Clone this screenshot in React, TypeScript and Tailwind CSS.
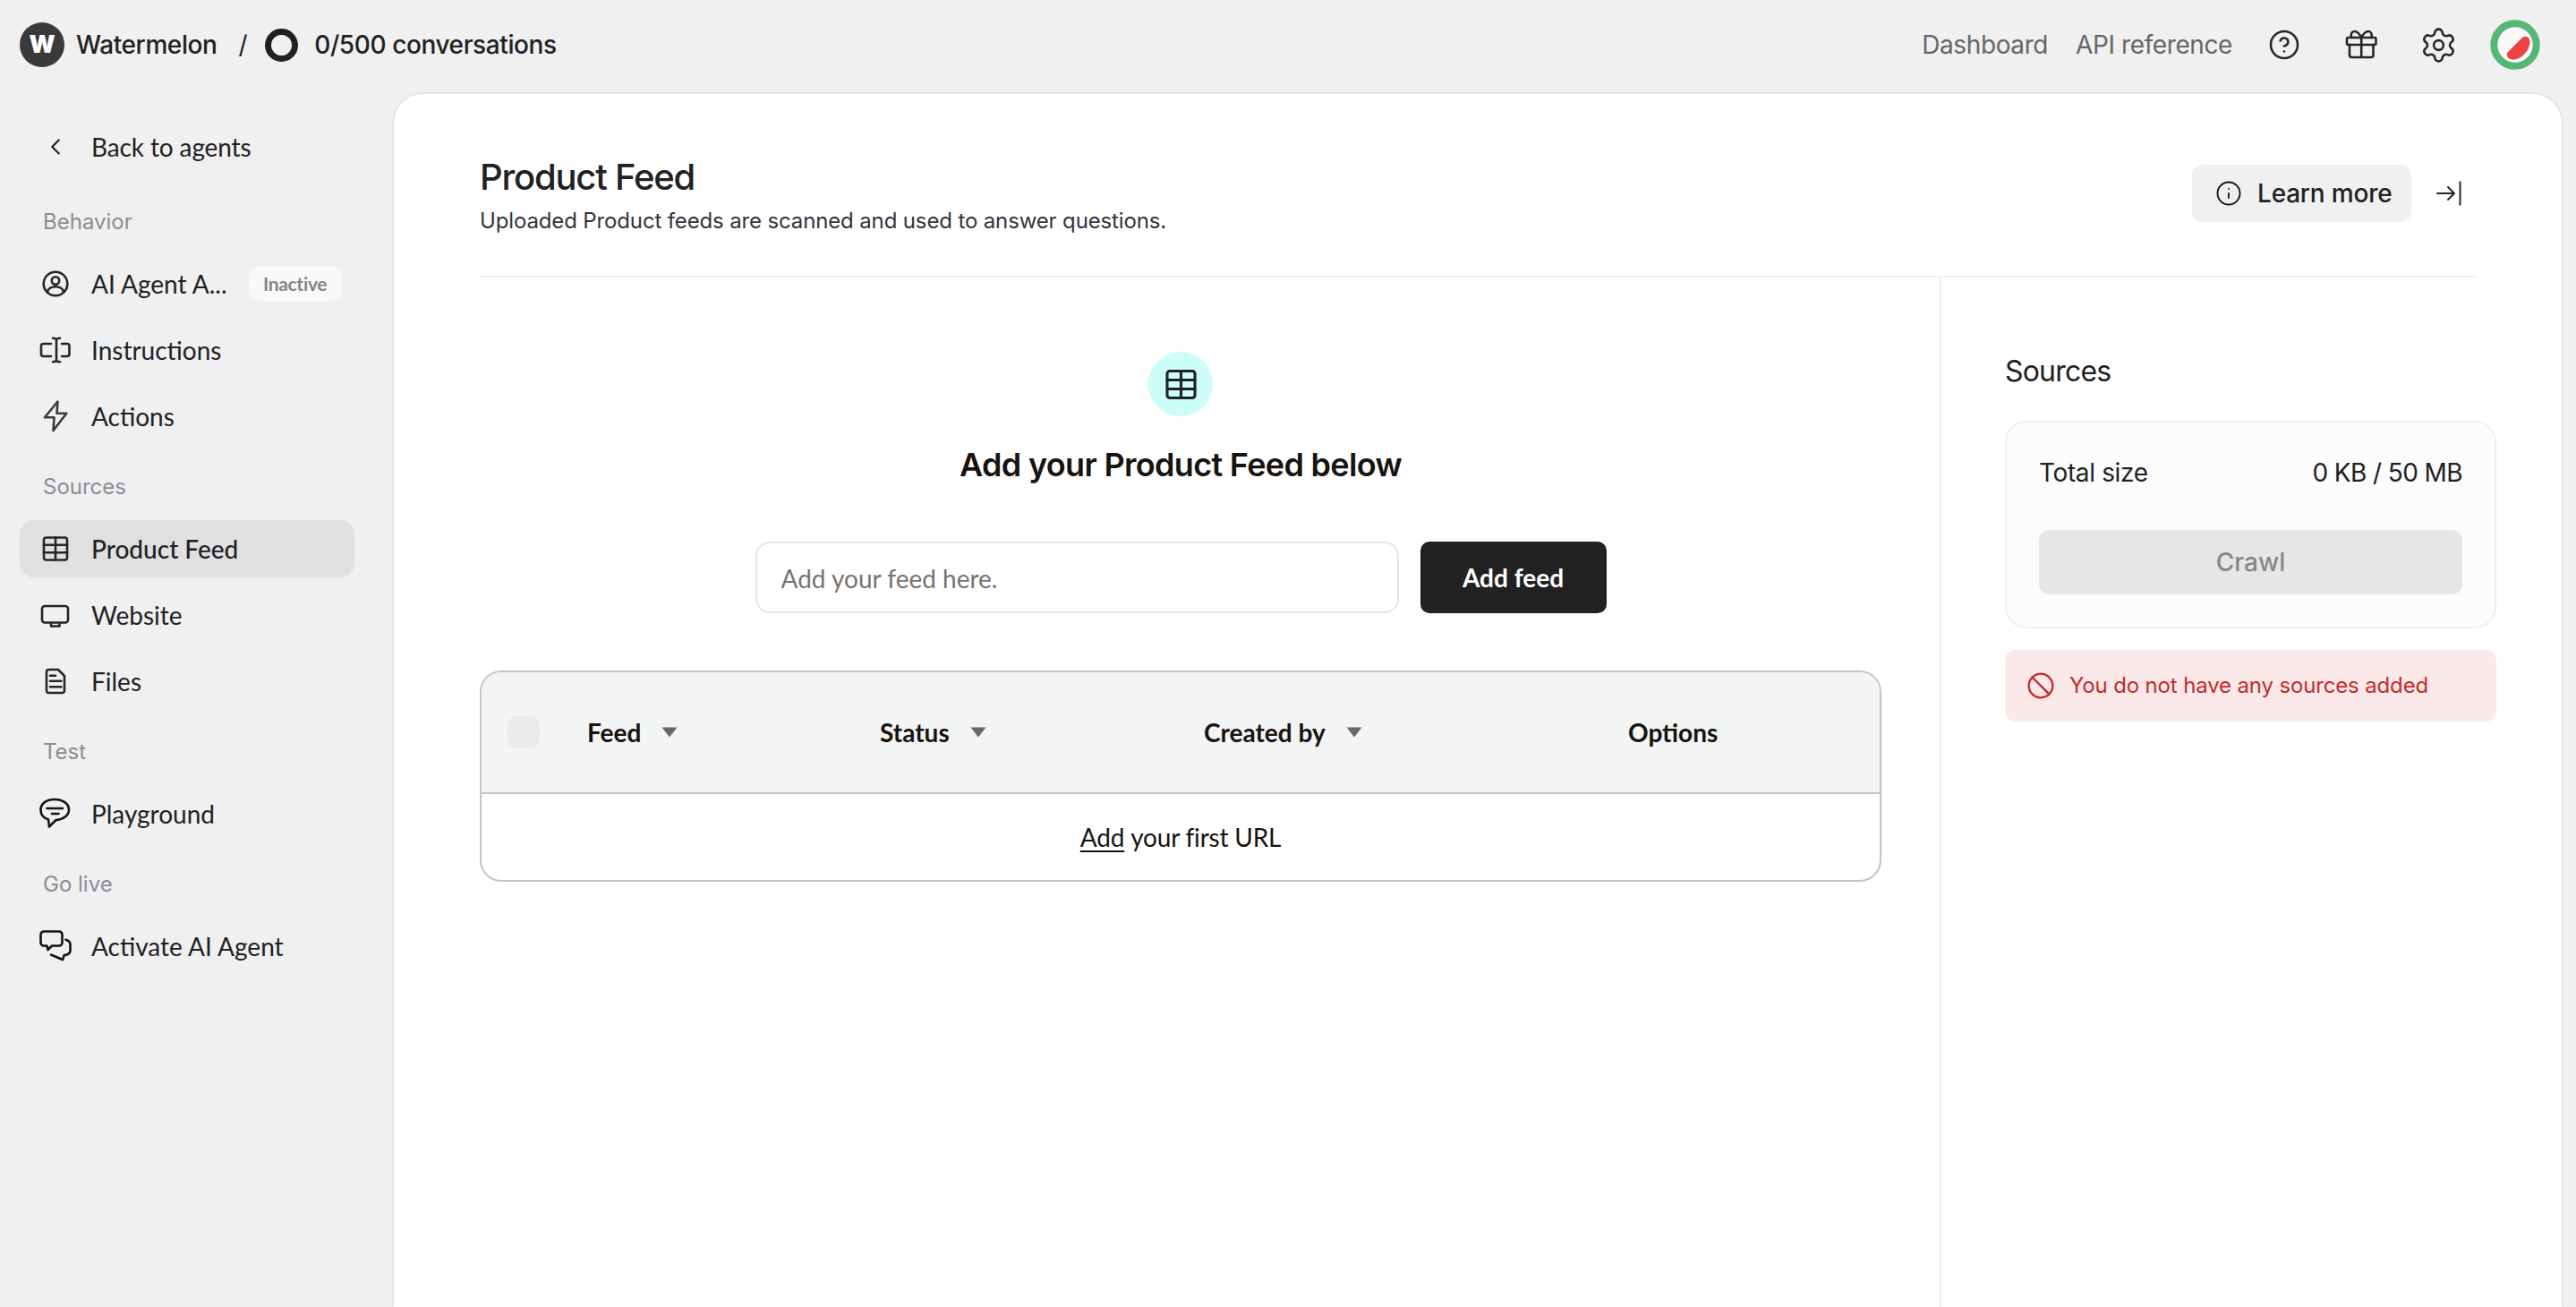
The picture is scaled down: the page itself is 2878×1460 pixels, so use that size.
import React from "react";
import { ChevronLeft, CircleHelp, Settings, Info, Ban } from "lucide-react";

const inter = "font-['Inter',sans-serif]";
const lato = "font-['Lato',sans-serif]";

function Ic({ children, stroke = "#24262b", size = 36 }: { children: React.ReactNode; stroke?: string; size?: number }) {
  return (
    <svg width={size} height={size} viewBox="0 0 36 36" fill="none" stroke={stroke} strokeWidth="2.6" strokeLinecap="round" strokeLinejoin="round" className="shrink-0 overflow-visible">
      {children}
    </svg>
  );
}

const UserIcon = () => (
  <Ic>
    <circle cx="18" cy="18" r="13.3" />
    <circle cx="18" cy="14.5" r="4.2" />
    <path d="M8.7 27.3C10 23 13.5 21.3 18 21.3S26 23 27.3 27.3" />
  </Ic>
);
const InstructionsIcon = () => (
  <Ic>
    <path d="M13 11H4.5A2.5 2.5 0 0 0 2 13.5V22.5A2.5 2.5 0 0 0 4.5 25H13" />
    <path d="M25 11H31A2.5 2.5 0 0 1 33.5 13.5V22.5A2.5 2.5 0 0 1 31 25H25" />
    <path d="M19 7V29M15 4.8C17 4.8 19 5 19 7C19 5 21 4.8 23 4.8M15 31.2C17 31.2 19 31 19 29C19 31 21 31.2 23 31.2" />
  </Ic>
);
const ZapIcon = () => (
  <Ic stroke="#3c3c3e">
    <path d="M20.5 1.5L6 19.3H16.5L15.5 34L30.3 14.7H19.5Z" />
  </Ic>
);
const TableIcon = ({ stroke = "#24262b", size = 36 }: { stroke?: string; size?: number }) => (
  <Ic stroke={stroke} size={size}>
    <rect x="5" y="5.5" width="26" height="25" rx="2.5" />
    <path d="M5 13.8H31M5 22.2H31M18 5.5V30.5" />
  </Ic>
);
const MonitorIcon = () => (
  <Ic>
    <rect x="3" y="8" width="29" height="18.5" rx="3" />
    <path d="M13 27V30.5H22.5V27" />
  </Ic>
);
const FileIcon = () => (
  <Ic>
    <path d="M10.5 5H21L28 12V28.5A2.5 2.5 0 0 1 25.5 31H10.5A2.5 2.5 0 0 1 8 28.5V7.5A2.5 2.5 0 0 1 10.5 5Z" />
    <path d="M12 11.7H18M12 17.7H24.5M12 24.3H24.5" />
  </Ic>
);
const ChatIcon = () => (
  <Ic stroke="#17130f">
    <path d="M17 2C26 2 33 6.5 33 13.5C33 20 26.5 24.5 18.5 25L11 32.5L10 24.3C5 23 1.5 19 1.5 13.5C1.5 6.5 8 2 17 2Z" />
    <path d="M8.5 12H26M14 18H21.5" />
  </Ic>
);
const ChatsIcon = () => (
  <Ic stroke="#17130f">
    <path d="M5 1.5H22A3.5 3.5 0 0 1 25.5 5V14A3.5 3.5 0 0 1 22 17.5H14L9.5 22L8.5 17.5H5A3.5 3.5 0 0 1 1.5 14V5A3.5 3.5 0 0 1 5 1.5Z" />
    <path d="M29.5 10.7C32.5 11.5 34.5 13 34.5 16V23C34.5 26 31 28 27.7 28L26 33L13 27.5" />
  </Ic>
);
const GiftIcon = () => (
  <svg width="36" height="36" viewBox="0 0 36 36" fill="none" stroke="#24262b" strokeWidth="2.6" strokeLinecap="round" strokeLinejoin="round" className="overflow-visible">
    <rect x="2" y="10" width="32.5" height="8" rx="1.5" />
    <path d="M5 18V29.5A2.5 2.5 0 0 0 7.5 32H29A2.5 2.5 0 0 0 31.5 29.5V18M18.2 10V32" />
    <path d="M18.2 10C16 5.5 13.5 3 10.5 3C7.5 3 6 6 7 10M18.2 10C20.5 5.5 23 3 26 3C29 3 30.5 6 29.5 10" />
  </svg>
);
const Avatar = () => (
  <svg width="56" height="56" viewBox="0 0 56 56" fill="none">
    <circle cx="28" cy="28" r="23.7" fill="#f9f7f7" stroke="#56b678" strokeWidth="8" />
    <path d="M20 36L36 20C40 17 45 20 44.5 26C43 37 33 45 25 44.5C20 44 17 40 20 36Z" fill="#ea4444" />
  </svg>
);
const CollapseIcon = () => (
  <svg width="30" height="30" viewBox="0 0 30 30" fill="none" stroke="#24262b" strokeWidth="2" strokeLinecap="round" strokeLinejoin="round">
    <path d="M2 15H21M14 8L21 15L14 22" />
    <path d="M27.5 1.5V28.5" strokeLinecap="butt" />
  </svg>
);
const Caret = () => (
  <svg width="18" height="12" viewBox="0 0 18 12" className="shrink-0">
    <path d="M0.5 0.5H17.5L9 11.5Z" fill="#6b6763" />
  </svg>
);

function Item({ icon, label, active }: { icon: React.ReactNode; label: string; active?: boolean }) {
  return (
    <div className={`h-[64px] w-[374px] ml-[22px] rounded-[16px] flex items-center pl-[22px] gap-[22px] ${active ? "bg-[#e0e0e0]" : ""}`}>
      {icon}
      <span className={`${lato} text-[28px] leading-[40px] text-[#202124] ${active ? "font-medium" : ""}`}>{label}</span>
    </div>
  );
}

function Group({ title, children }: { title: string; children: React.ReactNode }) {
  return (
    <div className="flex flex-col">
      <div className={`${inter} ml-[48px] h-[36px] mb-[19px] text-[24px] leading-[36px] text-[#8a8d96]`}>{title}</div>
      <div className="flex flex-col gap-[10px]">{children}</div>
    </div>
  );
}

function HeadCell({ label }: { label: string }) {
  return (
    <div className="flex items-center gap-[23px]">
      <span className={`${lato} text-[28px] font-bold leading-[40px] text-[#17130f]`}>{label}</span>
      <Caret />
    </div>
  );
}

export default function App() {
  return (
    <div className="h-screen w-full flex flex-col bg-[#f0f0f0] overflow-hidden">
      <header className="h-[105px] shrink-0 pb-[5px] pl-[22px] pr-[40px] flex items-center justify-between">
        <div className={`${inter} flex items-center text-[28px] font-medium text-[#202124] tracking-[-0.4px]`}>
          <div className="w-[50px] h-[50px] rounded-full bg-[#3a3a3a] flex items-center justify-center text-white text-[27px] font-black">W</div>
          <span className="ml-[13px]">Watermelon</span>
          <span className="ml-[24px] font-normal">/</span>
          <div className="ml-[20px] w-[37px] h-[37px] rounded-full border-[7px] border-[#202124]" />
          <span className="ml-[18px]">0/500 conversations</span>
        </div>
        <div className={`${inter} flex items-center text-[28px] text-[#666666] tracking-[-0.4px]`}>
          <span>Dashboard</span>
          <span className="ml-[31px]">API reference</span>
          <div className="ml-[40px] w-[36px] flex justify-center">
            <CircleHelp size={38} strokeWidth={1.7} color="#24262b" />
          </div>
          <div className="ml-[50px]">
            <GiftIcon />
          </div>
          <div className="ml-[44px] w-[48px] flex justify-center">
            <Settings size={43} strokeWidth={1.45} color="#24262b" />
          </div>
          <div className="ml-[34px]">
            <Avatar />
          </div>
        </div>
      </header>

      <div className="flex-1 flex min-h-0">
        <aside className="w-[440px] shrink-0 pt-[27px] flex flex-col">
          <div className="h-[64px] ml-[22px] flex items-center pl-[22px] gap-[22px]">
            <div className="w-[36px] flex justify-center">
              <ChevronLeft size={30} strokeWidth={1.8} color="#24262b" />
            </div>
            <span className={`${lato} text-[28px] leading-[40px] text-[#202124] tracking-[-0.12px]`}>Back to agents</span>
          </div>
          <div className="mt-[34px] flex flex-col gap-[29px]">
            <Group title="Behavior">
              <div className="h-[64px] w-[374px] ml-[22px] flex items-center pl-[22px] gap-[22px]">
                <UserIcon />
                <span className={`${lato} text-[28px] leading-[40px] text-[#202124]`}>AI Agent A...</span>
                <span className={`${lato} ml-[2px] h-[38px] w-[104px] text-center rounded-[12px] bg-[#f9f9f9] text-[21px] leading-[38px] font-bold tracking-[-0.3px] text-[#85868a]`}>Inactive</span>
              </div>
              <Item icon={<InstructionsIcon />} label="Instructions" />
              <Item icon={<ZapIcon />} label="Actions" />
            </Group>
            <Group title="Sources">
              <Item icon={<TableIcon />} label="Product Feed" active />
              <Item icon={<MonitorIcon />} label="Website" />
              <Item icon={<FileIcon />} label="Files" />
            </Group>
            <Group title="Test">
              <Item icon={<ChatIcon />} label="Playground" />
            </Group>
            <Group title="Go live">
              <Item icon={<ChatsIcon />} label="Activate AI Agent" />
            </Group>
          </div>
        </aside>

        <main className="flex-1 mr-[16px] bg-white rounded-t-[32px] shadow-[0_0_3px_rgba(0,0,0,0.18)] flex flex-col min-w-0">
          <div className="mx-[96px] pt-[69px] pb-[44px] border-b-[2px] border-[#f0f0f0] flex justify-between items-start">
            <div>
              <h1 className={`${inter} text-[40px] leading-[48px] font-medium tracking-[-1.2px] text-[#202124]`}>Product Feed</h1>
              <p className={`${inter} mt-[8px] text-[24px] leading-[34px] tracking-[-0.14px] text-[#33343a]`}>Uploaded Product feeds are scanned and used to answer questions.</p>
            </div>
            <div className="mt-[10px] flex items-center">
              <button className={`${inter} h-[64px] w-[245px] rounded-[12px] bg-[#f0f0f0] flex items-center pl-[26px] gap-[17px] text-[28px] font-medium tracking-[-0.2px] text-[#202124]`}>
                <Info size={30} strokeWidth={1.5} color="#17130f" />
                Learn more
              </button>
              <div className="ml-[27px] mr-[15px]">
                <CollapseIcon />
              </div>
            </div>
          </div>

          <div className="flex-1 flex min-h-0">
            <section className="flex-1 pl-[96px] pr-[65px] pt-[83px] flex flex-col items-center min-w-0">
              <div className="w-[72px] h-[72px] rounded-full bg-[#ccfdf8] flex items-center justify-center">
                <TableIcon stroke="#1f2328" size={43} />
              </div>
              <h2 className={`${inter} mt-[32px] text-[36px] leading-[44px] font-semibold tracking-[-0.68px] text-[#17130f]`}>Add your Product Feed below</h2>
              <div className="mt-[64px] flex items-stretch gap-[24px]">
                <input
                  readOnly
                  placeholder="Add your feed here."
                  className={`${lato} w-[719px] h-[80px] rounded-[16px] border-[2px] border-[#e6e6e6] bg-white px-[27px] pt-[2px] text-[28px] placeholder:text-[#77736f] outline-none`}
                />
                <button className={`${lato} w-[208px] h-[80px] rounded-[10px] bg-[#212121] text-white text-[28px] font-bold`}>Add feed</button>
              </div>
              <div className="mt-[64px] w-[1566px] rounded-[24px] border-[2px] border-[#c4c4c4] overflow-hidden">
                <div className="h-[136px] bg-[#f3f5f4] border-b-[2px] border-[#c4c4c4] grid grid-cols-[118px_327px_362px_474px_1fr] items-center">
                  <div className="pl-[29px]">
                    <div className="w-[36px] h-[36px] rounded-[10px] bg-[#e9eaec]" />
                  </div>
                  <HeadCell label="Feed" />
                  <HeadCell label="Status" />
                  <HeadCell label="Created by" />
                  <span className={`${lato} text-[28px] font-bold leading-[40px] text-[#17130f]`}>Options</span>
                </div>
                <div className={`${lato} h-[96px] flex items-center justify-center text-[28px] tracking-[-0.2px] text-[#17130f]`}>
                  <span className="underline underline-offset-[4px]">Add</span>
                  <span className="ml-[7px]">your first URL</span>
                </div>
              </div>
            </section>

            <section className="w-[695px] shrink-0 border-l-[2px] border-[#f0f0f0] pl-[71px] pt-[85px]">
              <h3 className={`${inter} text-[32px] leading-[40px] tracking-[-0.8px] text-[#202124]`}>Sources</h3>
              <div className="mt-[35px] w-[549px] h-[232px] rounded-[24px] border-[2px] border-[#f0f0f0] bg-[#fcfcfc] pl-[36px] pr-[36px] pt-[36px]">
                <div className={`${inter} h-[40px] flex items-center justify-between text-[28px] leading-[40px] text-[#202124]`}>
                  <span className="tracking-[-0.37px]">Total size</span>
                  <span className="tracking-[-0.6px]">0 KB / 50 MB</span>
                </div>
                <button className={`${inter} mt-[44px] w-full h-[72px] rounded-[12px] bg-[#e6e6e6] text-[28px] font-medium text-[#868686]`}>Crawl</button>
              </div>
              <div className="mt-[24px] w-[549px] h-[80px] rounded-[12px] bg-[#fbe8e9] flex items-center pl-[24px] gap-[16px]">
                <Ban size={32} strokeWidth={1.75} color="#c42b2b" />
                <span className={`${inter} text-[24px] tracking-[-0.15px] text-[#c42b2b]`}>You do not have any sources added</span>
              </div>
            </section>
          </div>
        </main>
      </div>
    </div>
  );
}
